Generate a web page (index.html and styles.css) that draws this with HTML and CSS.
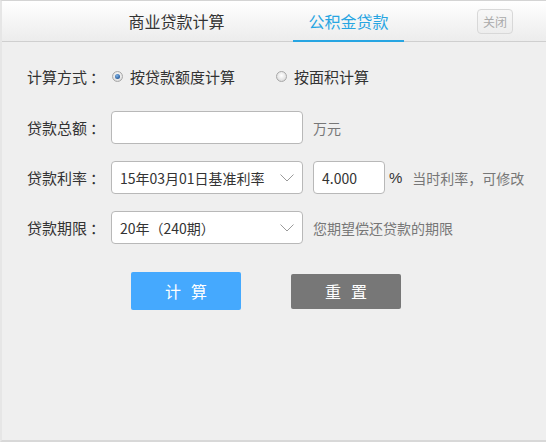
FILE: index.html
```html
<!DOCTYPE html>
<html lang="zh-CN">
<head>
<meta charset="utf-8">
<title>公积金贷款计算器</title>
<link rel="stylesheet" href="styles.css">
</head>
<body>
<div class="panel">
  <div class="header">
    <div class="tab">商业贷款计算</div>
    <div class="tab tab-active">公积金贷款</div>
    <button class="close-btn">关闭</button>
  </div>
  <div class="form">
    <div class="row row-mode">
      <span class="label">计算方式<span class="colon">：</span></span>
      <label class="radio radio-checked"><span class="radio-dot"></span>按贷款额度计算</label>
      <label class="radio"><span class="radio-dot"></span>按面积计算</label>
    </div>
    <div class="row">
      <span class="label">贷款总额<span class="colon">：</span></span>
      <div class="field field-wide"></div>
      <span class="hint">万元</span>
    </div>
    <div class="row">
      <span class="label">贷款利率<span class="colon">：</span></span>
      <div class="field field-wide select">
        <span>15年03月01日基准利率</span>
        <svg class="chevron" width="14" height="8" viewBox="0 0 14 8"><path d="M0.5 0.5 L7 7 L13.5 0.5" fill="none" stroke="#9a9a9a" stroke-width="1"/></svg>
      </div>
      <div class="field field-rate">4.000</div>
      <span class="unit">%</span>
      <span class="hint hint-rate">当时利率，可修改</span>
    </div>
    <div class="row">
      <span class="label">贷款期限<span class="colon">：</span></span>
      <div class="field field-wide select">
        <span>20年（240期）</span>
        <svg class="chevron" width="14" height="8" viewBox="0 0 14 8"><path d="M0.5 0.5 L7 7 L13.5 0.5" fill="none" stroke="#9a9a9a" stroke-width="1"/></svg>
      </div>
      <span class="hint">您期望偿还贷款的期限</span>
    </div>
    <div class="actions">
      <button class="btn btn-calc">计算</button>
      <button class="btn btn-reset">重置</button>
    </div>
  </div>
</div>
</body>
</html>
```
FILE: styles.css
```css
* { box-sizing: border-box; }
html, body { margin: 0; padding: 0; }
body {
  font-family: "Microsoft YaHei", "Noto Sans CJK SC", "Noto Sans", sans-serif;
  color: #333;
  background: #efefef;
}
.panel {
  width: 546px;
  height: 442px;
  background: #efefef;
  border-top: 1px solid #d4d4d4;
  border-left: 2px solid #e6e6e6;
  border-bottom: 2px solid #d8d8d8;
}
.header {
  height: 41px;
  display: flex;
  align-items: flex-start;
  padding-left: 119px;
  background: linear-gradient(#ffffff, #ececec);
  border-bottom: 1px solid #cfcfcf;
}
.tab {
  width: 111px;
  height: 40px;
  line-height: 40px;
  text-align: center;
  font-size: 16px;
  color: #333;
  margin-right: 61px;
}
.tab-active {
  color: #27a5e2;
  border-bottom: 2px solid #27a5e2;
  height: 41px;
  line-height: 40px;
}
.close-btn {
  margin-left: auto;
  margin-right: 33px;
  margin-top: 8px;
  width: 36px;
  height: 25px;
  padding: 0;
  font-family: inherit;
  font-size: 12px;
  color: #aaa;
  background: linear-gradient(#f8f8f8, #ededed);
  border: 1px solid #d8d8d8;
  border-radius: 4px;
  line-height: 22px;
}
.form {
  padding: 18px 0 0 25px;
}
.row {
  display: flex;
  align-items: center;
  height: 33px;
  margin-bottom: 17px;
}
.row-mode {
  margin-bottom: 18px;
}
.label {
  width: 84px;
  font-size: 15px;
  line-height: 20px;
  color: #333;
  white-space: nowrap;
}
.colon {
  margin-left: 3px;
}
.radio {
  display: flex;
  align-items: center;
  font-size: 15px;
  line-height: 20px;
  color: #333;
  margin-right: 40px;
}
.radio-dot {
  width: 11px;
  height: 11px;
  border-radius: 50%;
  border: 1px solid #a8a8a8;
  background: radial-gradient(circle at 50% 40%, #ffffff 0, #e2e2e2 65%, #c8c8c8 100%);
  margin: 0 7px 0 1px;
  position: relative;
}
.radio-checked .radio-dot::after {
  content: "";
  position: absolute;
  left: 2px;
  top: 2px;
  width: 5px;
  height: 5px;
  border-radius: 50%;
  background: radial-gradient(circle at 40% 35%, #7fb3e6 0, #2c5f9e 70%);
}
.field {
  height: 33px;
  background: #fff;
  border: 1px solid #b8b8b8;
  border-radius: 4px;
  display: flex;
  align-items: center;
  padding: 0 8px;
  font-size: 14px;
  color: #333;
}
.field-wide {
  width: 192px;
}
.select {
  justify-content: space-between;
  padding-right: 8px;
}
.chevron {
  display: block;
  margin-top: 1px;
}
.field-rate {
  width: 72px;
  margin-left: 10px;
}
.unit {
  font-size: 15px;
  color: #333;
  margin-left: 4px;
  font-family: "Liberation Sans", "Noto Sans", sans-serif;
}
.hint {
  font-size: 14px;
  color: #777;
  margin-left: 10px;
}
.hint-rate {
  margin-left: 10px;
}
.actions {
  display: flex;
  align-items: center;
  padding-left: 104px;
  padding-top: 11px;
}
.btn {
  width: 110px;
  border: none;
  border-radius: 2px;
  font-family: inherit;
  font-size: 16px;
  color: #fff;
  letter-spacing: 10px;
  text-indent: 10px;
  padding: 0;
}
.btn-calc {
  height: 38px;
  background: #45a9fe;
  margin-right: 50px;
}
.btn-reset {
  height: 35px;
  background: #777777;
}
```
